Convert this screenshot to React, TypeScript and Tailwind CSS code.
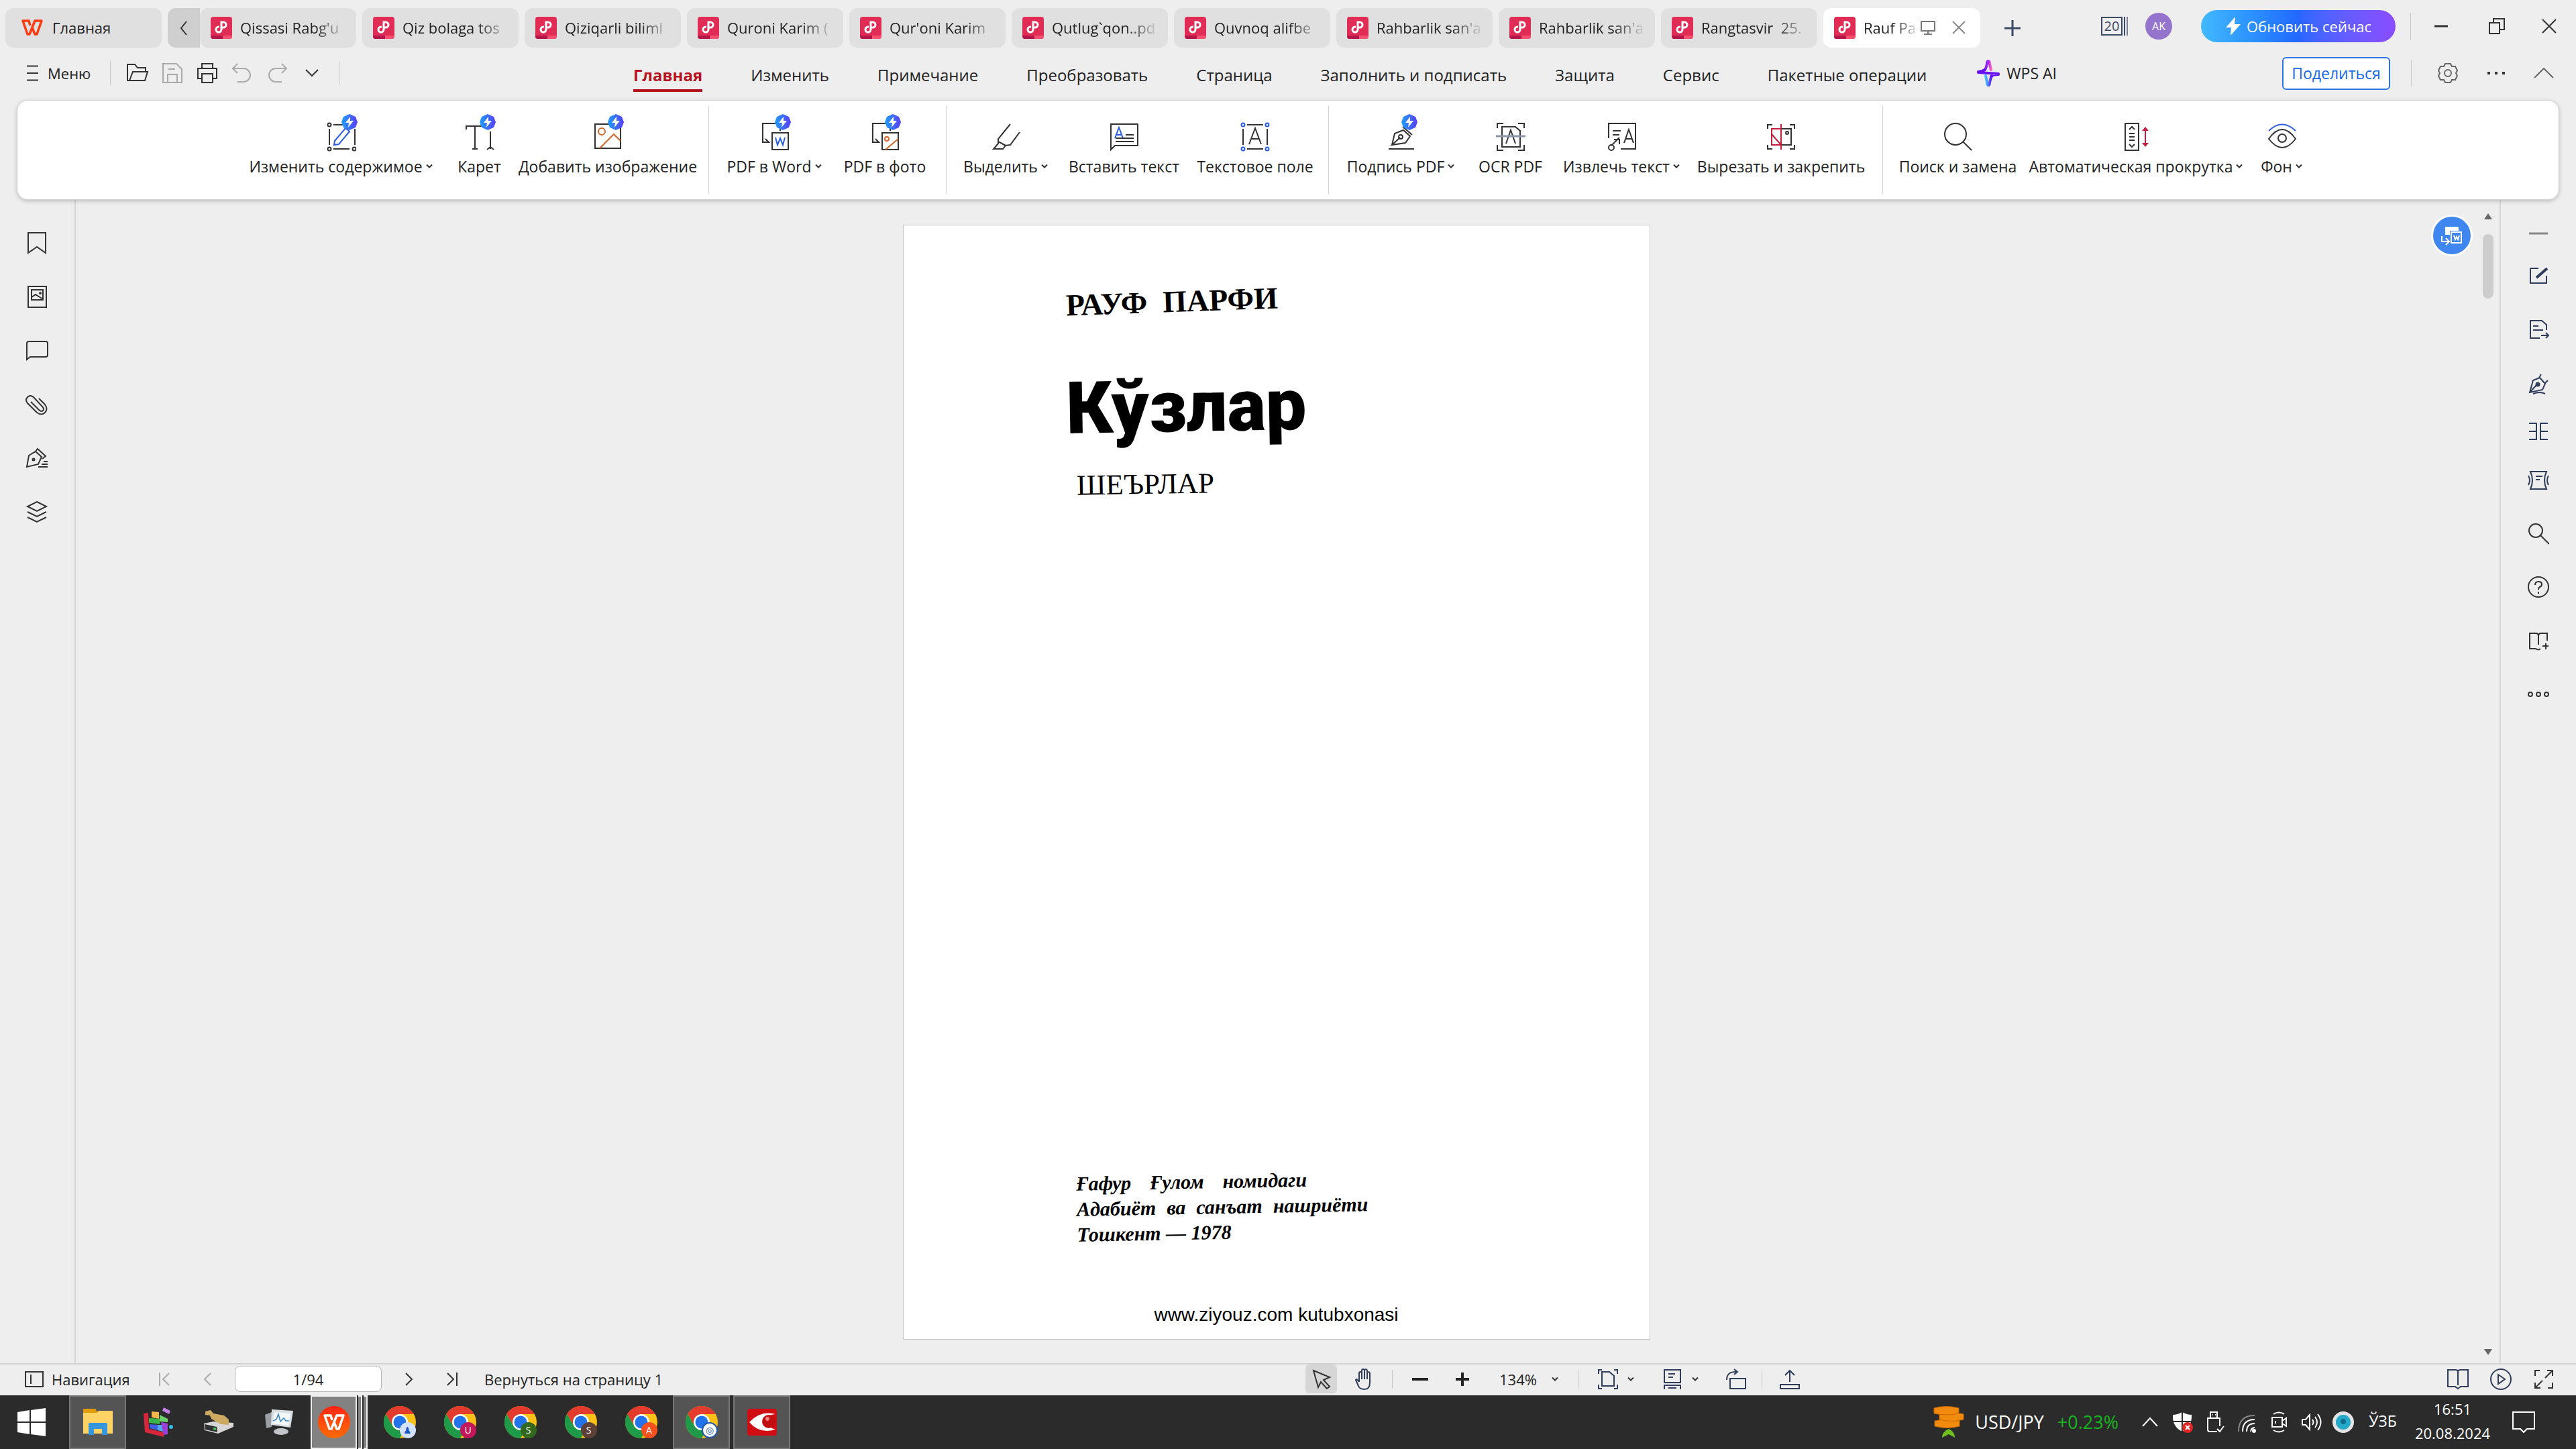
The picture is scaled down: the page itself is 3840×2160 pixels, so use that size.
import * as React from "react";

type BoxProps = {
  size?: number;
  w?: number;
  h?: number;
  className?: string;
  sw?: number;
  children: React.ReactNode;
};

// Stroke icon, drawn at its real pixel size
function Ico({ size = 32, w, h, className = "text-[#333]", sw = 2, children }: BoxProps) {
  const width = w ?? size;
  const height = h ?? size;
  return (
    <svg
      width={width}
      height={height}
      viewBox={`0 0 ${width} ${height}`}
      fill="none"
      stroke="currentColor"
      strokeWidth={sw}
      className={`shrink-0 ${className}`}
      aria-hidden="true"
    >
      {children}
    </svg>
  );
}

function Caret() {
  return (
    <Ico w={12} h={8} sw={2} className="text-[#333]">
      <path d="M2 1.5l4 4 4-4" />
    </Ico>
  );
}

function Divider({ className = "h-9" }: { className?: string }) {
  return <span className={`w-px shrink-0 bg-[#c8c8c8] ${className}`} />;
}

/* ---------- title bar ---------- */

const docTabs = [
  "Qissasi Rabg'u",
  "Qiz bolaga tos",
  "Qiziqarli biliml",
  "Quroni Karim (",
  "Qur'oni Karim",
  "Qutlug`qon..pd",
  "Quvnoq alifbe",
  "Rahbarlik san'a",
  "Rahbarlik san'a",
  "Rangtasvir  25.",
];

function PdfIcon() {
  return (
    <svg width="32" height="33" viewBox="0 0 32 33" className="shrink-0" aria-hidden="true">
      <rect width="32" height="33" rx="4" fill="#e12d55" />
      <path d="M0 28h18v5H4a4 4 0 0 1-4-4z" fill="#b5164a" />
      <path d="M18 28h14v1a4 4 0 0 1-4 4H18z" fill="#f5506f" />
      <path
        d="M13 15h-1a4 4 0 1 0 4 4V8h3a4 4 0 0 1 0 8h-3"
        fill="none"
        stroke="#fff"
        strokeWidth="3"
      />
    </svg>
  );
}

function WpsMark({ className }: { className: string }) {
  return (
    <svg viewBox="0 0 32 24" className={className} fill="none" stroke="currentColor" strokeWidth="3.5" strokeLinejoin="round" aria-hidden="true">
      <path d="M13 9l-2-7H2l7 20h3l8-20h10l-7 20h-3l-4-10" />
    </svg>
  );
}

function DocTab({ title }: { title: string }) {
  return (
    <button type="button" className="flex h-[59px] w-[233px] shrink-0 items-center gap-3 rounded-xl bg-[#e0e0e0] pb-px pl-4">
      <PdfIcon />
      <span className="w-[160px] text-left whitespace-pre [mask-image:linear-gradient(to_right,black_70%,transparent)]">{title}</span>
    </button>
  );
}

function TitleBar() {
  return (
    <header className="flex h-[76px] items-start pt-3 pl-2">
      <button type="button" className="flex h-[59px] w-[233px] shrink-0 items-center gap-[14px] rounded-xl bg-[#e0e0e0] pb-px pl-6">
        <WpsMark className="h-6 w-8 text-[#fb3a12]" />
        Главная
      </button>
      <div className="ml-[9px] flex min-w-0 gap-[9px]">
        <div className="flex shrink-0">
          <button type="button" aria-label="Назад" className="flex h-[59px] w-12 items-center justify-center rounded-l-xl bg-[#cfcfcf]">
            <Ico w={12} h={22}>
              <path d="M10 1L2 11l8 10" />
            </Ico>
          </button>
          <DocTab title={docTabs[0]} />
        </div>
        {docTabs.slice(1).map((t, i) => (
          <DocTab key={i} title={t} />
        ))}
        <div className="flex h-[59px] w-[234px] shrink-0 items-center rounded-xl bg-white pb-px pl-4">
          <PdfIcon />
          <button type="button" className="ml-3 w-[84px] text-left whitespace-nowrap [mask-image:linear-gradient(to_right,black_55%,transparent)]">
            Rauf Pa
          </button>
          <Ico size={24} className="text-[#777]">
            <path d="M2 3h20v14H2zM12 17v5M6 22h12" />
          </Ico>
          <button type="button" aria-label="Закрыть вкладку" className="ml-6">
            <Ico size={20} className="text-[#888]">
              <path d="M1 1l18 18M19 1L1 19" />
            </Ico>
          </button>
        </div>
      </div>
      <button type="button" aria-label="Новая вкладка" className="flex h-[59px] w-24 shrink-0 items-center justify-center">
        <Ico size={24} sw={3} className="text-[#3c4a66]">
          <path d="M12 0v24M0 12h24" />
        </Ico>
      </button>
      <div className="ml-auto flex h-[54px] shrink-0 items-center">
        <button type="button" className="flex h-7 w-[42px] text-[20px] leading-7 text-[#3c4a66]">
          <span className="w-8 border-2 border-[#3c4a66] text-center leading-6">20</span>
          <span className="ml-[2px] h-7 border-l-2 border-[#3c4a66]" />
          <span className="ml-[2px] h-7 border-l-2 border-[#7b869b]" />
        </button>
        <span className="ml-6 flex size-10 items-center justify-center rounded-full bg-[#9474cc] text-[16px] text-white">AK</span>
        <button type="button" className="ml-[43px] flex h-12 w-[290px] items-center justify-center gap-2 rounded-full bg-linear-to-r from-[#43b9ff] via-[#2468ff] to-[#8a4cff] text-white">
          <svg width="24" height="28" viewBox="0 0 24 28" fill="currentColor" aria-hidden="true">
            <path d="M15 0L1 16h8L8 28l15-17h-9z" />
          </svg>
          Обновить сейчас
        </button>
        <Divider className="ml-[22px] h-10" />
        <button type="button" aria-label="Свернуть" className="flex w-[90px] justify-center">
          <Ico w={22} h={22} sw={3}>
            <path d="M1 11h20" />
          </Ico>
        </button>
        <button type="button" aria-label="Восстановить" className="flex w-[76px] justify-center">
          <Ico size={26}>
            <path d="M2 8h15v16H2zM8 8V2h16v16h-7" />
          </Ico>
        </button>
        <button type="button" aria-label="Закрыть" className="flex w-20 justify-center">
          <Ico size={22}>
            <path d="M1 1l20 20M21 1L1 21" />
          </Ico>
        </button>
      </div>
    </header>
  );
}

/* ---------- menu row ---------- */

const menuTabs = [
  "Главная",
  "Изменить",
  "Примечание",
  "Преобразовать",
  "Страница",
  "Заполнить и подписать",
  "Защита",
  "Сервис",
  "Пакетные операции",
];

function MenuRow() {
  return (
    <nav className="flex h-[66px] items-center">
      <button type="button" className="flex w-[164px] shrink-0 items-center gap-[14px] pl-10">
        <Ico w={17} h={24}>
          <path d="M0 1.500h17M0 12h17M0 22.500h17" />
        </Ico>
        Меню
      </button>
      <Divider />
      <div className="ml-[14px] flex shrink-0">
        <button type="button" aria-label="Открыть" className="flex w-[52px] justify-center">
          <Ico w={34} h={28}>
            <path d="M5 26H2V2h11l4 5h12v6M5 26l5-13h22l-4 13z" />
          </Ico>
        </button>
        <button type="button" aria-label="Сохранить" className="flex w-[52px] justify-center">
          <Ico w={30} h={30} className="text-[#aaa]">
            <path d="M1 1h20l8 8v20H1zM8 29V17h14v12M9 9h10" />
          </Ico>
        </button>
        <button type="button" aria-label="Печать" className="flex w-[52px] justify-center">
          <Ico w={30} h={30}>
            <path d="M7 8V1h16v7M6 23H1V8h28v15h-5M7 16h16v13H7z" />
          </Ico>
        </button>
        <button type="button" aria-label="Отменить" className="flex w-[52px] justify-center">
          <Ico w={30} h={30} className="text-[#aaa]">
            <path d="M8 1L1 8l7 7M2 8h15a10 10 0 0 1 0 20H8" />
          </Ico>
        </button>
        <button type="button" aria-label="Повторить" className="flex w-[52px] justify-center">
          <Ico w={30} h={30} className="text-[#aaa]">
            <path d="M22 1l7 7-7 7M28 8H13a10 10 0 0 0 0 20h9" />
          </Ico>
        </button>
        <button type="button" aria-label="Ещё" className="flex w-[52px] items-center justify-center">
          <Ico w={20} h={12}>
            <path d="M1 1l9 9 9-9" />
          </Ico>
        </button>
      </div>
      <Divider className="ml-[14px] h-9" />
      <div className="ml-[438px] flex shrink-0 gap-[72px] self-start text-[24px]">
        {menuTabs.map((t, i) => (
          <button
            key={t}
            type="button"
            className={
              i === 0
                ? "border-b-4 border-[#b5121f] pt-5 pb-[5px] leading-8 font-bold text-[#b5121f]"
                : "border-b-4 border-transparent pt-5 pb-[5px] leading-8"
            }
          >
            {t}
          </button>
        ))}
      </div>
      <button type="button" className="ml-[75px] flex shrink-0 items-center gap-[10px] text-[23px]">
        <svg width="34" height="40" viewBox="0 0 34 40" aria-hidden="true">
          <defs>
            <linearGradient id="aiTop" x1="0" x2="1">
              <stop offset="0" stopColor="#8a1cf5" />
              <stop offset="0.6" stopColor="#a52cf5" />
              <stop offset="1" stopColor="#ff5fc0" />
            </linearGradient>
            <linearGradient id="aiBottom" x1="0" x2="1">
              <stop offset="0" stopColor="#4cc3ff" />
              <stop offset="1" stopColor="#5a16f0" />
            </linearGradient>
          </defs>
          <g fill="none" strokeWidth="4" strokeLinejoin="round" strokeLinecap="round">
            <path d="M12 15q2-3 3-9 0-4 2-4t2 4l2 9" stroke="url(#aiTop)" />
            <path d="M13 24l2 10q0 4 2 4t2-4q1-6 3-10" stroke="url(#aiBottom)" />
            <path d="M12 15q-3 2-10 3v1l30 2v1q-8 0-11 3" stroke="#6a12f2" />
          </g>
        </svg>
        WPS AI
      </button>
      <div className="ml-auto flex shrink-0 items-center">
        <button type="button" className="flex h-[49px] w-[161px] items-center justify-center rounded-md border-2 border-[#2a73e8] bg-white text-[23px] text-[#1768e8]">
          Поделиться
        </button>
        <Divider className="ml-[31px] h-10" />
        <button type="button" aria-label="Настройки" className="flex w-[108px] justify-center">
          <Ico size={30} className="text-[#666]">
            <path d="M11 1h8l2 4h5l3 6-2 4 2 4-3 6h-5l-2 4h-8l-2-4H4l-3-6 2-4-2-4 3-6h5z" />
            <circle cx="15" cy="15" r="5" />
          </Ico>
        </button>
        <button type="button" aria-label="Дополнительно" className="flex w-9 justify-center">
          <Ico w={26} h={4} className="text-[#333]">
            <path d="M0 2h4M11 2h4M22 2h4" strokeWidth="4" />
          </Ico>
        </button>
        <button type="button" aria-label="Свернуть ленту" className="flex w-[101px] justify-center pl-1">
          <Ico w={30} h={16} className="text-[#666]">
            <path d="M1 15L15 1l14 14" />
          </Ico>
        </button>
      </div>
    </nav>
  );
}

/* ---------- ribbon ---------- */

type RibbonItem = {
  label: string;
  width: string;
  icon: React.ReactNode;
  badge?: boolean;
  menu?: boolean;
};

const blue = "#2b5be0";
const orange = "#d3672c";
const red = "#c41e3f";

const convertArrow = <path d="M30 13V2H4v28h9M8 25l5 5H7" />;

const ribbon: RibbonItem[][] = [
  [
    {
      label: "Изменить содержимое",
      width: "w-[304px]",
      badge: true,
      menu: true,
      icon: (
        <>
          <path d="M10 4h24M10 40h24M4 10v24M42 10v24" />
          <circle cx="4" cy="4" r="2.500" />
          <circle cx="4" cy="40" r="2.500" />
          <circle cx="41" cy="40" r="2.500" />
          <path d="M12 28L28 9l6 5-16 19-7 1z" stroke={blue} />
        </>
      ),
    },
    {
      label: "Карет",
      width: "w-[108px]",
      badge: true,
      icon: <path d="M2 11V6h26M15 6v34M11 40h8M38 14v26M33 41l5-4 5 4" />,
    },
    {
      label: "Добавить изображение",
      width: "w-[275px]",
      badge: true,
      icon: (
        <>
          <path d="M3 3h38v36H3z" />
          <circle cx="13" cy="14" r="5" stroke={orange} />
          <path d="M10 39l21-21 10 10" stroke={orange} />
        </>
      ),
    },
  ],
  [
    {
      label: "PDF в Word",
      width: "w-[172px]",
      badge: true,
      menu: true,
      icon: (
        <>
          {convertArrow}
          <path d="M18 16h24v25H18z" fill="#fff" />
          <path d="M23 23l3 11 4-10 4 10 3-11" stroke={blue} />
        </>
      ),
    },
    {
      label: "PDF в фото",
      width: "w-[157px]",
      badge: true,
      icon: (
        <>
          {convertArrow}
          <path d="M18 16h24v25H18z" fill="#fff" />
          <circle cx="25" cy="25" r="3" stroke={orange} />
          <path d="M23 41l19-16" stroke={orange} />
        </>
      ),
    },
  ],
  [
    {
      label: "Выделить",
      width: "w-[154px]",
      menu: true,
      icon: <path d="M28 3L10 25v7l-7 8h14l4-5 7-1 14-19M10 29l11 6" />,
    },
    {
      label: "Вставить текст",
      width: "w-[198px]",
      icon: (
        <>
          <path d="M2 41V3h40v32H8z" />
          <path d="M8 24l6-16 6 16M10 19h8" stroke={blue} />
          <path d="M24 19h12M9 24h27M9 29h27" />
        </>
      ),
    },
    {
      label: "Текстовое поле",
      width: "w-[193px]",
      icon: (
        <>
          <path d="M10 4h24M10 40h24M4 10v24M40 10v24M13 33l9-24 9 24M16 25h12" />
          <g stroke={blue}>
            <circle cx="4" cy="4" r="2.500" />
            <circle cx="40" cy="4" r="2.500" />
            <circle cx="4" cy="40" r="2.500" />
            <circle cx="40" cy="40" r="2.500" />
          </g>
        </>
      ),
    },
  ],
  [
    {
      label: "Подпись PDF",
      width: "w-[192px]",
      badge: true,
      menu: true,
      icon: (
        <>
          <path d="M8 34l4-17 13-5 10 9-7 10-20 3 12-11M24 7l14 12M3 40h38" />
          <circle cx="21" cy="22" r="3" />
        </>
      ),
    },
    {
      label: "OCR PDF",
      width: "w-[134px]",
      icon: (
        <>
          <path d="M2 9V2h9M33 2h9v7M2 34v8h9M33 42h9v-8" />
          <path d="M9 7h20l7 6v24H9zM15 32l7-20 7 20" />
          <path d="M0 21h44" stroke="#8d96a5" strokeWidth="3" />
        </>
      ),
    },
    {
      label: "Извлечь текст",
      width: "w-[198px]",
      menu: true,
      icon: (
        <>
          <path d="M2 24V2h40v38H20M8 13h12M8 19h10M25 31l7-20 7 20M27 25h10M6 35l12-12M10 26h8v7" />
          <circle cx="6" cy="38" r="4" />
        </>
      ),
    },
    {
      label: "Вырезать и закрепить",
      width: "w-[277px]",
      icon: (
        <>
          <path d="M2 10V4h7M35 4h7v6M2 34v6h7M35 40h7v-6M23 10h14v24H23" />
          <circle cx="31" cy="16" r="2" />
          <path d="M22 3v38M22 10H8v24h14M8 18l14 16" stroke={red} />
        </>
      ),
    },
  ],
  [
    {
      label: "Поиск и замена",
      width: "w-[200px]",
      icon: (
        <>
          <circle cx="18" cy="18" r="16" />
          <path d="M29 29l13 13" />
        </>
      ),
    },
    {
      label: "Автоматическая прокрутка",
      width: "w-[332px]",
      menu: true,
      icon: (
        <>
          <path d="M5 2h20v40H5zM11 11l4-4 4 4M11 17h8M11 22h8M11 27h8M11 33l4 4 4-4" />
          <path d="M35 10v24" stroke={red} />
          <path d="M35 7l5 6H30zM35 37l5-6H30z" fill={red} stroke="none" />
        </>
      ),
    },
    {
      label: "Фон",
      width: "w-[102px]",
      menu: true,
      icon: (
        <>
          <path d="M2 13Q22-6 42 13" stroke={blue} />
          <path d="M2 25Q22-3 42 25 22 51 2 25z" />
          <circle cx="22" cy="24" r="6" />
        </>
      ),
    },
  ],
];

function Badge() {
  return (
    <svg width="24" height="24" viewBox="0 0 24 24" className="absolute -top-3 left-[22px]" aria-hidden="true">
      <defs>
        <linearGradient id="bolt" x1="0" x2="1">
          <stop offset="0" stopColor="#1ea0ff" />
          <stop offset="1" stopColor="#5a3df5" />
        </linearGradient>
      </defs>
      <path d="M12 0l9 4 3 8-3 8-9 4-9-4-3-8 3-8z" fill="url(#bolt)" />
      <path d="M13 4L6 13h5l-1 7 8-10h-5z" fill="#fff" />
    </svg>
  );
}

function Ribbon() {
  return (
    <div className="z-10 mx-[25px] mt-[7px] flex h-[149px] justify-center rounded-2xl border border-[#cfcfcf] bg-white py-2 pr-8 text-[23px] shadow-[0_2px_6px_rgba(0,0,0,0.2)]">
      {ribbon.map((group, gi) => (
        <div key={gi} className="flex shrink-0 border-l border-[#d2d2d2] px-3 first:border-transparent">
          {group.map((item) => (
            <button key={item.label} type="button" className={`flex flex-col items-center gap-[6px] pt-6 ${item.width}`}>
              <span className="relative">
                <Ico size={44}>{item.icon}</Ico>
                {item.badge && <Badge />}
              </span>
              <span className="flex items-center gap-1 leading-8 whitespace-nowrap">
                {item.label}
                {item.menu && <Caret />}
              </span>
            </button>
          ))}
        </div>
      ))}
    </div>
  );
}

/* ---------- side rails ---------- */

const leftRail: [string, React.ReactNode][] = [
  ["Закладки", <path d="M5 2h26v30l-13-9-13 9z" />],
  [
    "Эскизы",
    <>
      <path d="M5 2h27v31H5zM10 7h17v15H10zM10 18l6-4 11 7" />
      <circle cx="23" cy="12" r="1" />
    </>,
  ],
  ["Примечания", <path d="M3 31V7q0-3 3-3h25q3 0 3 3v17q0 3-3 3H8z" />],
  ["Вложения", <path d="M9 14l13 13q3 2 5 0t0-5L13 7Q8 3 4 7t0 9l14 14q7 5 12 0t0-12l-9-9" />],
  [
    "Подписи",
    <>
      <path d="M3 31l3-17 10-6 9 8-5 11zM16 8l3-4 12 11-5 4M28 23h6M25 27h9M20 31h14" />
      <circle cx="13" cy="20" r="1.500" />
    </>,
  ],
  ["Слои", <path d="M18 3l14 7-14 7-14-7zM4 18l14 7 14-7M4 26l14 7 14-7" />],
];

const navy = "text-[#2f3d5a]";

const rightRail: { name: string; height: string; color?: string; icon: React.ReactNode }[] = [
  { name: "Свернуть панель", height: "h-12", color: "text-[#888]", icon: <path d="M2 16h28" strokeWidth="3" /> },
  {
    name: "Изменить",
    height: "h-[78px]",
    color: navy,
    icon: (
      <>
        <path d="M16 5H4v22h24V16" />
        <path d="M13 19L29 5" strokeWidth="4" />
      </>
    ),
  },
  {
    name: "Экспорт",
    height: "h-[82px]",
    color: navy,
    icon: <path d="M18 29H4V3h17l7 6v8M8 11h8M8 17h15M20 25h11M27 21l4 4-4 4" />,
  },
  {
    name: "Подписать",
    height: "h-20",
    color: navy,
    icon: (
      <>
        <path d="M3 29l5-18 10-4 8 9-4 9zM20 2l-3 5M30 11l-5 5M3 29l11-12M8 31q10-4 18 0" />
        <circle cx="15" cy="17" r="2.500" fill="currentColor" />
      </>
    ),
  },
  { name: "Разделить", height: "h-[62px]", color: navy, icon: <path d="M2 4h11v24H2M2 16h11M30 4H19v24h11M30 16H19" /> },
  {
    name: "Сжать",
    height: "h-[84px]",
    color: navy,
    icon: <path d="M4 3h24q-6 13 0 26H4q6-13 0-26zM12 10h10M12 15h6M1 9q4 7 0 14M31 9q-4 7 0 14" />,
  },
  {
    name: "Поиск",
    height: "h-[76px]",
    icon: (
      <>
        <circle cx="12" cy="11" r="10" />
        <path d="M19 18l13 13" />
      </>
    ),
  },
  {
    name: "Справка",
    height: "h-[82px]",
    icon: (
      <>
        <circle cx="16" cy="16" r="15" />
        <path d="M11 13q0-5 5-5t5 4q0 3-3 4-2 1-2 4M16 23v3" />
      </>
    ),
  },
  {
    name: "Чтение",
    height: "h-[78px]",
    icon: <path d="M13 28H3V5h9q4 0 4 4 0-4 4-4h9v11M16 9v13M12 28q4 3 7 0M27 20v9M22 24h9" />,
  },
  {
    name: "Ещё",
    height: "h-[82px]",
    icon: (
      <>
        <circle cx="4" cy="16" r="3" />
        <circle cx="16" cy="16" r="3" />
        <circle cx="28" cy="16" r="3" />
      </>
    ),
  },
];

/* ---------- document ---------- */

function DocumentPage() {
  return (
    <article className="flex h-[1662px] w-[1114px] flex-col border border-[#c4c4c4] bg-white pt-[86px] pl-[242px] text-black">
      <p className="w-fit -rotate-2 font-['Liberation_Serif',serif] text-[46px] leading-[56px] font-bold whitespace-pre">РАУФ  ПАРФИ</p>
      <h1 className="mt-[56px] w-fit -rotate-1 font-['Roboto','Liberation_Sans',sans-serif] text-[108px] leading-[144px] font-black">
        Кўзлар
      </h1>
      <p className="mt-5 ml-4 w-fit -rotate-1 font-['Liberation_Serif',serif] text-[43px] leading-[48px]">ШЕЪРЛАР</p>
      <div className="mt-auto ml-4 w-fit -rotate-1 font-['Liberation_Serif',serif] text-[30px] leading-[38px] font-bold italic">
        <p className="flex gap-7">
          <span>Ғафур</span>
          <span>Ғулом</span>
          <span>номидаги</span>
        </p>
        <p className="flex gap-4">
          <span>Адабиёт</span>
          <span>ва</span>
          <span>санъат</span>
          <span>нашриёти</span>
        </p>
        <p>Тошкент — 1978</p>
      </div>
      <p className="mt-[88px] mb-5 pr-[242px] text-center font-['Liberation_Sans',sans-serif] text-[28px] leading-8 whitespace-nowrap">
        www.ziyouz.com kutubxonasi
      </p>
    </article>
  );
}

function Workspace() {
  return (
    <div className="flex flex-1">
      <aside className="flex w-[113px] shrink-0 flex-col items-center gap-11 border-r-2 border-[#d6d6d6] pt-[47px] pr-[2px]">
        {leftRail.map(([name, icon]) => (
          <button key={name} type="button" aria-label={name}>
            <Ico size={36}>{icon}</Ico>
          </button>
        ))}
      </aside>
      <main className="relative flex flex-1 justify-center pt-[37px] pb-[35px]">
        <DocumentPage />
        <button
          type="button"
          aria-label="PDF в Word"
          className="absolute top-[22px] right-[6px] flex size-[62px] items-center justify-center rounded-full border-[3px] border-white bg-[#3f86f0]"
        >
          <Ico size={32} className="text-white">
            <path d="M6 3h20v6H13v6H6z" fill="currentColor" stroke="none" />
            <path d="M15 11h15v16H15zM19 16l2 6 2-4 2 4 2-6M1 17v8h10M7 20l5 5-5 5" />
          </Ico>
        </button>
      </main>
      <div className="flex w-[34px] shrink-0 flex-col items-center pt-5 pb-3">
        <svg width="12" height="9" viewBox="0 0 12 9" fill="#666" aria-hidden="true">
          <path d="M6 0l6 9H0z" />
        </svg>
        <span className="mt-[22px] h-24 w-4 rounded-lg bg-[#cdcdcd]" />
        <svg width="12" height="9" viewBox="0 0 12 9" fill="#666" className="mt-auto" aria-hidden="true">
          <path d="M6 9l6-9H0z" />
        </svg>
      </div>
      <aside className="flex w-[114px] shrink-0 flex-col items-center border-l-2 border-[#d6d6d6] pt-[26px]">
        {rightRail.map((r) => (
          <button key={r.name} type="button" aria-label={r.name} className={`flex items-center ${r.height}`}>
            <Ico size={32} className={r.color}>
              {r.icon}
            </Ico>
          </button>
        ))}
      </aside>
    </div>
  );
}

/* ---------- status bar ---------- */

function StatusBar() {
  const slot = "flex h-full w-16 shrink-0 items-center justify-center";
  return (
    <footer className="flex h-12 items-center border-t-2 border-[#d2d2d2] pb-[3px]">
      <div className="flex h-full flex-[1946_1_0%] items-center">
        <button type="button" className="flex w-[213px] shrink-0 items-center gap-3 pl-[37px]">
          <Ico w={28} h={24}>
            <path d="M1 1h26v22H1zM9 5v14" />
          </Ico>
          Навигация
        </button>
        <button type="button" aria-label="Первая страница" className={slot}>
          <Ico w={18} h={20} className="text-[#aaa]">
            <path d="M2 0v20M16 1L7 10l9 9" />
          </Ico>
        </button>
        <button type="button" aria-label="Предыдущая страница" className={slot}>
          <Ico w={12} h={20} className="text-[#aaa]">
            <path d="M11 1l-9 9 9 9" />
          </Ico>
        </button>
        <input
          aria-label="Номер страницы"
          defaultValue="1/94"
          className="mx-[9px] h-[39px] w-[219px] shrink-0 rounded-lg border border-[#b5b5b5] bg-white text-center"
        />
        <button type="button" aria-label="Следующая страница" className={slot}>
          <Ico w={12} h={20}>
            <path d="M1 1l9 9-9 9" />
          </Ico>
        </button>
        <button type="button" aria-label="Последняя страница" className={slot}>
          <Ico w={18} h={20}>
            <path d="M16 0v20M2 1l9 9-9 9" />
          </Ico>
        </button>
        <button type="button" className="ml-4 whitespace-nowrap">Вернуться на страницу 1</button>
      </div>
      <div className="flex h-full shrink-0 items-center">
        <button type="button" aria-label="Выделение" className="flex h-full w-[47px] items-center justify-center rounded-md bg-[#d6d6d6]">
          <Ico w={30} h={30}>
            <path d="M3 2l24 10-9 4 9 10-4 3-9-10-4 8z" />
          </Ico>
        </button>
        <button type="button" aria-label="Рука" className="flex w-[82px] justify-center">
          <Ico w={28} h={32} className={navy}>
            <path d="M6 20V7q0-2 2-2t2 2v9V3q0-2 2-2t2 2v13V2q3-2 4 1v13V6q3-2 4 1v14q0 10-8 10-7 0-9-5l-4-9q1-3 5 3" />
          </Ico>
        </button>
        <Divider className="h-7" />
        <button type="button" aria-label="Уменьшить" className="flex w-[82px] justify-center">
          <Ico size={24} sw={4} className="text-[#222]">
            <path d="M0 12h24" />
          </Ico>
        </button>
        <button type="button" aria-label="Увеличить" className="flex w-11 justify-center">
          <Ico size={20} sw={4} className="text-[#222]">
            <path d="M0 10h20M10 0v20" />
          </Ico>
        </button>
        <button type="button" className="flex w-[150px] items-center justify-between pr-7 pl-[33px]">
          134%
          <Caret />
        </button>
        <Divider className="h-7" />
        <button type="button" aria-label="По размеру страницы" className="flex w-[100px] items-center gap-3 pl-[28px]">
          <Ico size={32} className={navy}>
            <path d="M2 8V2h5M25 2h5v6M2 24v6h5M25 30h5v-6M7 5h11l7 6v15H7z" />
          </Ico>
          <Caret />
        </button>
        <button type="button" aria-label="Режим просмотра" className="flex w-24 items-center gap-3 pl-6">
          <Ico size={32} className={navy}>
            <path d="M4 2h24v19H4zM10 8h10M10 13h7M4 31v-6h24v6M10 29h12" />
          </Ico>
          <Caret />
        </button>
        <button type="button" aria-label="Повернуть" className="flex w-[77px] justify-center">
          <Ico size={32} className={navy}>
            <path d="M7 15h23v15H7zM2 17Q2 4 17 5M13 1l5 4-5 4" />
          </Ico>
        </button>
        <Divider className="h-7" />
        <button type="button" aria-label="Отправить" className="flex w-[82px] justify-center">
          <Ico size={30} className={navy}>
            <path d="M1 23h28v6H1zM15 19V2M8 9l7-7 7 7" />
          </Ico>
        </button>
      </div>
      <div className="flex h-full flex-[1131_1_0%] justify-end">
        <button type="button" aria-label="Чтение" className={slot}>
          <Ico size={32} className={navy}>
            <path d="M1 2h11q4 0 4 3 0-3 4-3h11v25H20l-4 3-4-3H1zM16 5v20" />
          </Ico>
        </button>
        <button type="button" aria-label="Воспроизвести" className={slot}>
          <Ico size={32} className={navy}>
            <circle cx="16" cy="16" r="15" />
            <path d="M12 9l10 7-10 7z" />
          </Ico>
        </button>
        <button type="button" aria-label="Во весь экран" className={`mr-4 ${slot}`}>
          <Ico size={28}>
            <path d="M1 9V1h7M19 1h8v8M27 19v8h-7M9 27H1v-8M16 12L27 1M12 16L1 27" />
          </Ico>
        </button>
      </div>
    </footer>
  );
}

/* ---------- taskbar ---------- */

function Chrome({ letter, color }: { letter: string; color: string }) {
  return (
    <span className="relative">
      <svg width="48" height="48" viewBox="0 0 48 48" aria-hidden="true">
        <circle cx="24" cy="24" r="24" fill="#fbc116" />
        <path d="M3.200 12A24 24 0 0 1 44.800 12H24L13.600 30z" fill="#e33b2e" />
        <path d="M3.200 12A24 24 0 0 0 24 48l10.400-18H13.600z" fill="#1e9a48" />
        <circle cx="24" cy="24" r="12" fill="#fff" />
        <circle cx="24" cy="24" r="9.500" fill="#2374ea" />
      </svg>
      <span className={`absolute top-6 left-6 flex size-6 items-center justify-center rounded-full text-[14px] leading-none ${color}`}>
        {letter}
      </span>
    </span>
  );
}

const activeBox = "border-2 border-[#777] bg-[#545454]";

const taskApps: { name: string; box?: string; icon: React.ReactNode }[] = [
  {
    name: "Проводник",
    box: activeBox,
    icon: (
      <svg width="46" height="42" viewBox="0 0 46 42" aria-hidden="true">
        <path d="M1 1h18l4 6H1z" fill="#e39a0c" />
        <path d="M1 7h20l3-3h21v34H1z" fill="#fdd366" />
        <path d="M9 40V24q0-2 2-2h24q2 0 2 2v16h-8v-9H17v9z" fill="#3596de" />
      </svg>
    ),
  },
  {
    name: "Библиотека",
    icon: (
      <svg width="44" height="44" viewBox="0 0 44 44" aria-hidden="true">
        <path d="M0 9l7-1 1 24 22 5v7L2 37z" fill="#d8263a" />
        <path d="M12 6l11 1v10l-11-2z" fill="#f0b64a" />
        <path d="M8 16l16 1v8L8 23z" fill="#39b54a" />
        <path d="M24 11l12 6v5l-12-1z" fill="#6cd06a" />
        <path d="M9 25l12 1v8l-12-3z" fill="#3f5fe0" />
        <path d="M21 26h8v10l-8-2z" fill="#4fa8f0" />
        <path d="M26 22l10 2v16l-6 1z" fill="#9a3fd8" />
        <path d="M30 0l10 5-2 5-10-5z" fill="#c07fe6" />
        <circle cx="41" cy="29" r="3" fill="#35b5e8" />
      </svg>
    ),
  },
  {
    name: "Сканер",
    icon: (
      <svg width="46" height="36" viewBox="0 0 46 36" aria-hidden="true">
        <path d="M1 20l14-3 30 2v6L22 35 2 30z" fill="#d6d6d6" />
        <path d="M2 21l18 4 1 8-18-4z" fill="#2f3230" />
        <circle cx="17" cy="28" r="2" fill="#38d058" />
        <path d="M3 2l8-2 4 5 16 3 7 6v8l-12-1-14-8-2-5-7-1z" fill="#cda961" />
      </svg>
    ),
  },
  {
    name: "Монитор",
    icon: (
      <svg width="44" height="42" viewBox="0 0 44 42" aria-hidden="true">
        <path d="M1 10l10-4v22L3 30z" fill="#9aa0a6" />
        <path d="M11 2l32 2-4 25-29-4z" fill="#d9dee3" />
        <path d="M15 6l24 2-3 18-24-3z" fill="#f4f8fb" />
        <path d="M13 19l5-2 3-8 3 11 5-5 3 4h5" fill="none" stroke="#3487c7" strokeWidth="1.500" />
        <ellipse cx="25" cy="35" rx="11" ry="5" fill="#c2c6ca" />
      </svg>
    ),
  },
  {
    name: "WPS Office",
    icon: (
      <span className="flex h-full w-full gap-[2px]">
        <span className="flex flex-1 items-center justify-center border-2 border-[#eee] bg-[#828282]">
          <span className="flex size-12 items-center justify-center rounded-full bg-linear-to-b from-[#fc1e14] to-[#ff6a00]">
            <WpsMark className="h-6 w-8 text-white" />
          </span>
        </span>
        <span className="w-[6px] border-2 border-l-0 border-[#eee] bg-[#828282]" />
        <span className="w-[6px] border-2 border-l-0 border-[#eee] bg-[#828282]" />
      </span>
    ),
  },
  { name: "Chrome 1", icon: <Chrome letter="♟" color="bg-[#d3e3fd] text-[#1a56c4]" /> },
  { name: "Chrome 2", icon: <Chrome letter="U" color="bg-[#c2185b] text-white" /> },
  { name: "Chrome 3", icon: <Chrome letter="S" color="bg-[#33691e] text-white" /> },
  { name: "Chrome 4", icon: <Chrome letter="S" color="bg-[#5d4037] text-white" /> },
  { name: "Chrome 5", icon: <Chrome letter="A" color="bg-[#f4511e] text-white" /> },
  {
    name: "Chrome 6",
    box: activeBox,
    icon: <Chrome letter="◎" color="border-2 border-[#2458a8] bg-white text-[#2458a8]" />,
  },
  {
    name: "Просмотр",
    box: activeBox,
    icon: (
      <svg width="44" height="40" viewBox="0 0 44 40" aria-hidden="true">
        <rect width="44" height="40" rx="4" fill="#d00d12" />
        <path d="M3 20Q20 2 42 8q-8 0-12 6-4 12 12 17Q18 38 3 20z" fill="#fff" />
        <circle cx="32" cy="19" r="10" fill="#c20d10" />
        <circle cx="30" cy="15" r="3" fill="#f08080" />
      </svg>
    ),
  },
];

const trayIcons: [string, React.ReactNode][] = [
  ["Скрытые значки", <path d="M5 22l11-12 11 12" />],
  [
    "Защита",
    <>
      <path d="M16 1q7 4 14 4 1 18-14 25Q1 23 2 5q7 0 14-4z" fill="#fff" stroke="none" />
      <path d="M16 1v29M2 15h28" stroke="#2b2b2b" />
      <circle cx="24" cy="24" r="8" fill="#e02525" stroke="none" />
      <path d="M21 21l6 6M27 21l-6 6" />
    </>,
  ],
  ["USB", <path d="M20 30H9q-3 0-3-3V10h18v12M10 10V1h10v9M13 5h1M17 5h1M20 26l4 4 6-8" />],
  [
    "Сеть",
    <>
      <path d="M22 30q0-5 6-6M16 30q0-12 12-12M10 30Q10 12 28 12" />
      <path d="M4 30Q4 6 28 6" stroke="#888" />
      <circle cx="27" cy="29" r="2" fill="#fff" />
    </>,
  ],
  ["Камера", <path d="M6 9h15v14H6zM21 14l6-4v12l-6-4M8 4q8-5 16 0M8 28q8 5 16 0M11 14v4" />],
  ["Звук", <path d="M3 12h5l6-7v22l-6-7H3zM18 12q3 4 0 8M22 8q6 8 0 16M26 4q9 12 0 24" />],
  [
    "Служба",
    <>
      <circle cx="16" cy="16" r="16" fill="#e3e3e3" stroke="none" />
      <circle cx="16" cy="16" r="11" fill="#23a9c9" stroke="none" />
      <circle cx="16" cy="15" r="4" fill="#126b8c" stroke="none" />
    </>,
  ],
];

function Taskbar() {
  return (
    <div className="flex h-20 items-stretch gap-[5px] bg-[#2b2b2b] text-white">
      <button type="button" aria-label="Пуск" className="flex w-[98px] shrink-0 items-center justify-center pr-1">
        <svg width="42" height="42" viewBox="0 0 42 42" fill="#fff" aria-hidden="true">
          <path d="M0 6l18-3v17H0zM20 3l22-3v20H20zM0 22h18v17L0 36zM20 22h22v20l-22-3z" />
        </svg>
      </button>
      {taskApps.map((a) => (
        <button key={a.name} type="button" aria-label={a.name} className={`flex w-[85px] shrink-0 items-center justify-center ${a.box ?? ""}`}>
          {a.icon}
        </button>
      ))}
      <div className="ml-auto flex shrink-0 items-center">
        <button type="button" className="flex items-center pr-[23px] text-[27px]">
          <svg width="46" height="48" viewBox="0 0 46 48" aria-hidden="true">
            <g fill="#f28a0e" stroke="#c96a00" strokeWidth="1">
              <path d="M2 22q18-4 37 0v8q-18 5-37 0z" />
              <path d="M9 12q18-4 36 0v8q-18 5-36 0z" />
              <path d="M1 3q18-5 37 0v8q-18 4-37 0z" />
            </g>
            <path d="M13 47q0-9 10-13 9 4 9 13l-9-5z" fill="#6fbf1f" />
          </svg>
          <span className="ml-4">USD/JPY</span>
          <span className="ml-5 text-[#19b51f]">+0.23%</span>
        </button>
        {trayIcons.map(([name, icon]) => (
          <button key={name} type="button" aria-label={name} className="flex w-12 justify-center">
            <Ico size={32} className="text-white">
              {icon}
            </Ico>
          </button>
        ))}
        <button type="button" className="w-[70px] pb-1 text-center text-[23px]">ЎЗБ</button>
        <button type="button" className="flex w-[138px] flex-col items-center pb-1 leading-9">
          <span>16:51</span>
          <span>20.08.2024</span>
        </button>
        <button type="button" aria-label="Уведомления" className="mr-[41px] flex w-[74px] justify-center">
          <Ico size={34} className="text-white">
            <path d="M1 2h32v25H22l-5 5-5-5H1z" />
          </Ico>
        </button>
      </div>
    </div>
  );
}

export default function App() {
  return (
    <div className="flex min-h-screen flex-col bg-[#eee] font-['Open_Sans','Noto_Sans',sans-serif] text-[22px] leading-8 text-[#222]">
      <TitleBar />
      <MenuRow />
      <Ribbon />
      <Workspace />
      <StatusBar />
      <Taskbar />
    </div>
  );
}
